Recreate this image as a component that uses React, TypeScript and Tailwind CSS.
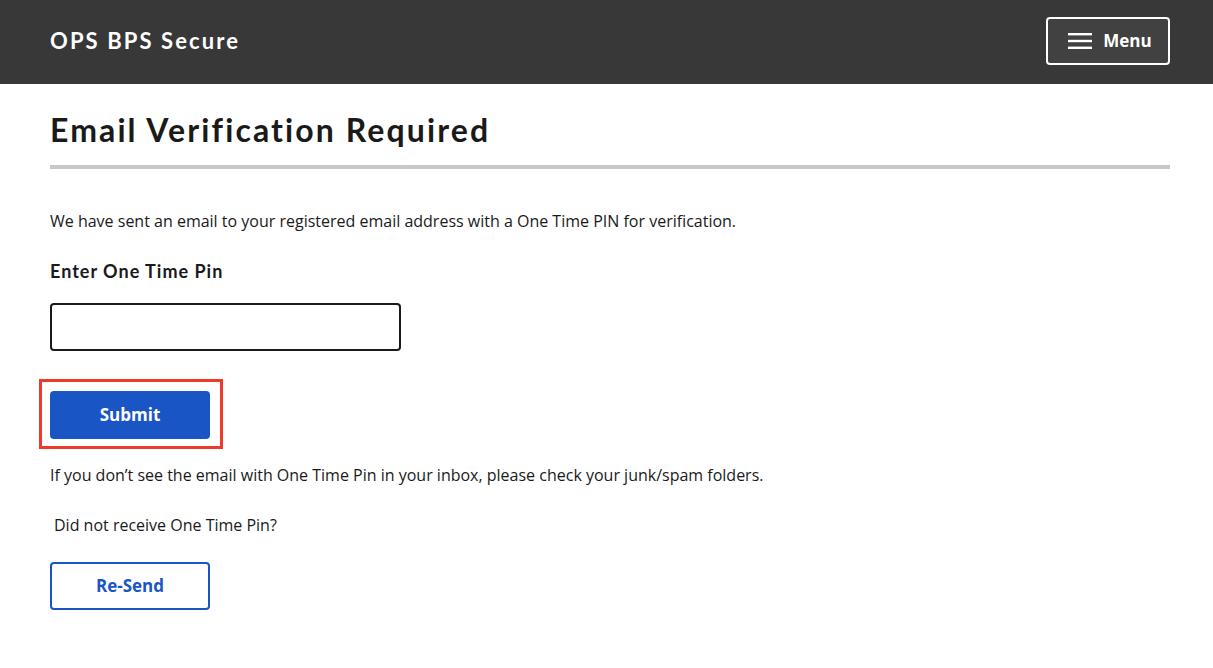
export default function App() {
  return (
    <div className="min-h-[668px] bg-white" style={{ fontFamily: '"Open Sans", sans-serif' }}>
      <header className="h-[84px] bg-[#383838] flex items-center justify-between pl-[50px] pr-[43px] pb-[2px]">
        <div className="text-white text-[22px] font-bold tracking-[2.1px] -mt-[2px]" style={{ fontFamily: 'Lato, sans-serif' }}>
          OPS BPS Secure
        </div>
        <button className="w-[124px] h-[48px] border-2 border-white rounded-[4px] bg-[#414141] flex items-center justify-center gap-[11px] pl-[4px] text-white font-bold text-[17px]">
          <svg width="24" height="16" viewBox="0 0 24 16">
            <rect x="0" y="0" width="24" height="2.4" fill="white" />
            <rect x="0" y="6.8" width="24" height="2.4" fill="white" />
            <rect x="0" y="13.6" width="24" height="2.4" fill="white" />
          </svg>
          <span>Menu</span>
        </button>
      </header>
      <main className="px-[50px] pr-[43px]">
        <h1
          className="text-[32px] font-bold text-[#1a1a1a] pt-[26px] pb-[15px] border-b-4 border-[#c8c8c8] leading-[40px] tracking-[2.1px]"
          style={{ fontFamily: 'Lato, sans-serif' }}
        >
          Email Verification Required
        </h1>
        <p className="mt-[40px] text-[16px] leading-[24px] text-[#1a1a1a]">
          We have sent an email to your registered email address with a One Time PIN for verification.
        </p>
        <label
          className="block mt-[26px] text-[18px] font-bold text-[#1a1a1a] leading-[24px] tracking-[1px]"
          style={{ fontFamily: 'Lato, sans-serif' }}
        >
          Enter One Time Pin
        </label>
        <input className="block mt-[20px] w-[351px] h-[48px] border-2 border-[#1a1a1a] rounded-[4px] outline-none" />
        <div className="mt-[28px] ml-[-11px] w-[184px] h-[70px] border-[3px] border-[#ef3a2a] p-[9px] pl-[8px]">
          <button className="w-[160px] h-[48px] bg-[#1a55c5] rounded-[4px] text-white font-bold text-[17px]">
            Submit
          </button>
        </div>
        <p className="mt-[14px] text-[16px] leading-[24px] text-[#1a1a1a]">
          If you don’t see the email with One Time Pin in your inbox, please check your junk/spam folders.
        </p>
        <p className="mt-[26px] ml-[4px] text-[16px] leading-[24px] text-[#1a1a1a]">
          Did not receive One Time Pin?
        </p>
        <button className="mt-[25px] w-[160px] h-[48px] border-2 border-[#1a55c5] rounded-[4px] text-[#1a55c5] font-bold text-[17px]">
          Re-Send
        </button>
      </main>
    </div>
  );
}
